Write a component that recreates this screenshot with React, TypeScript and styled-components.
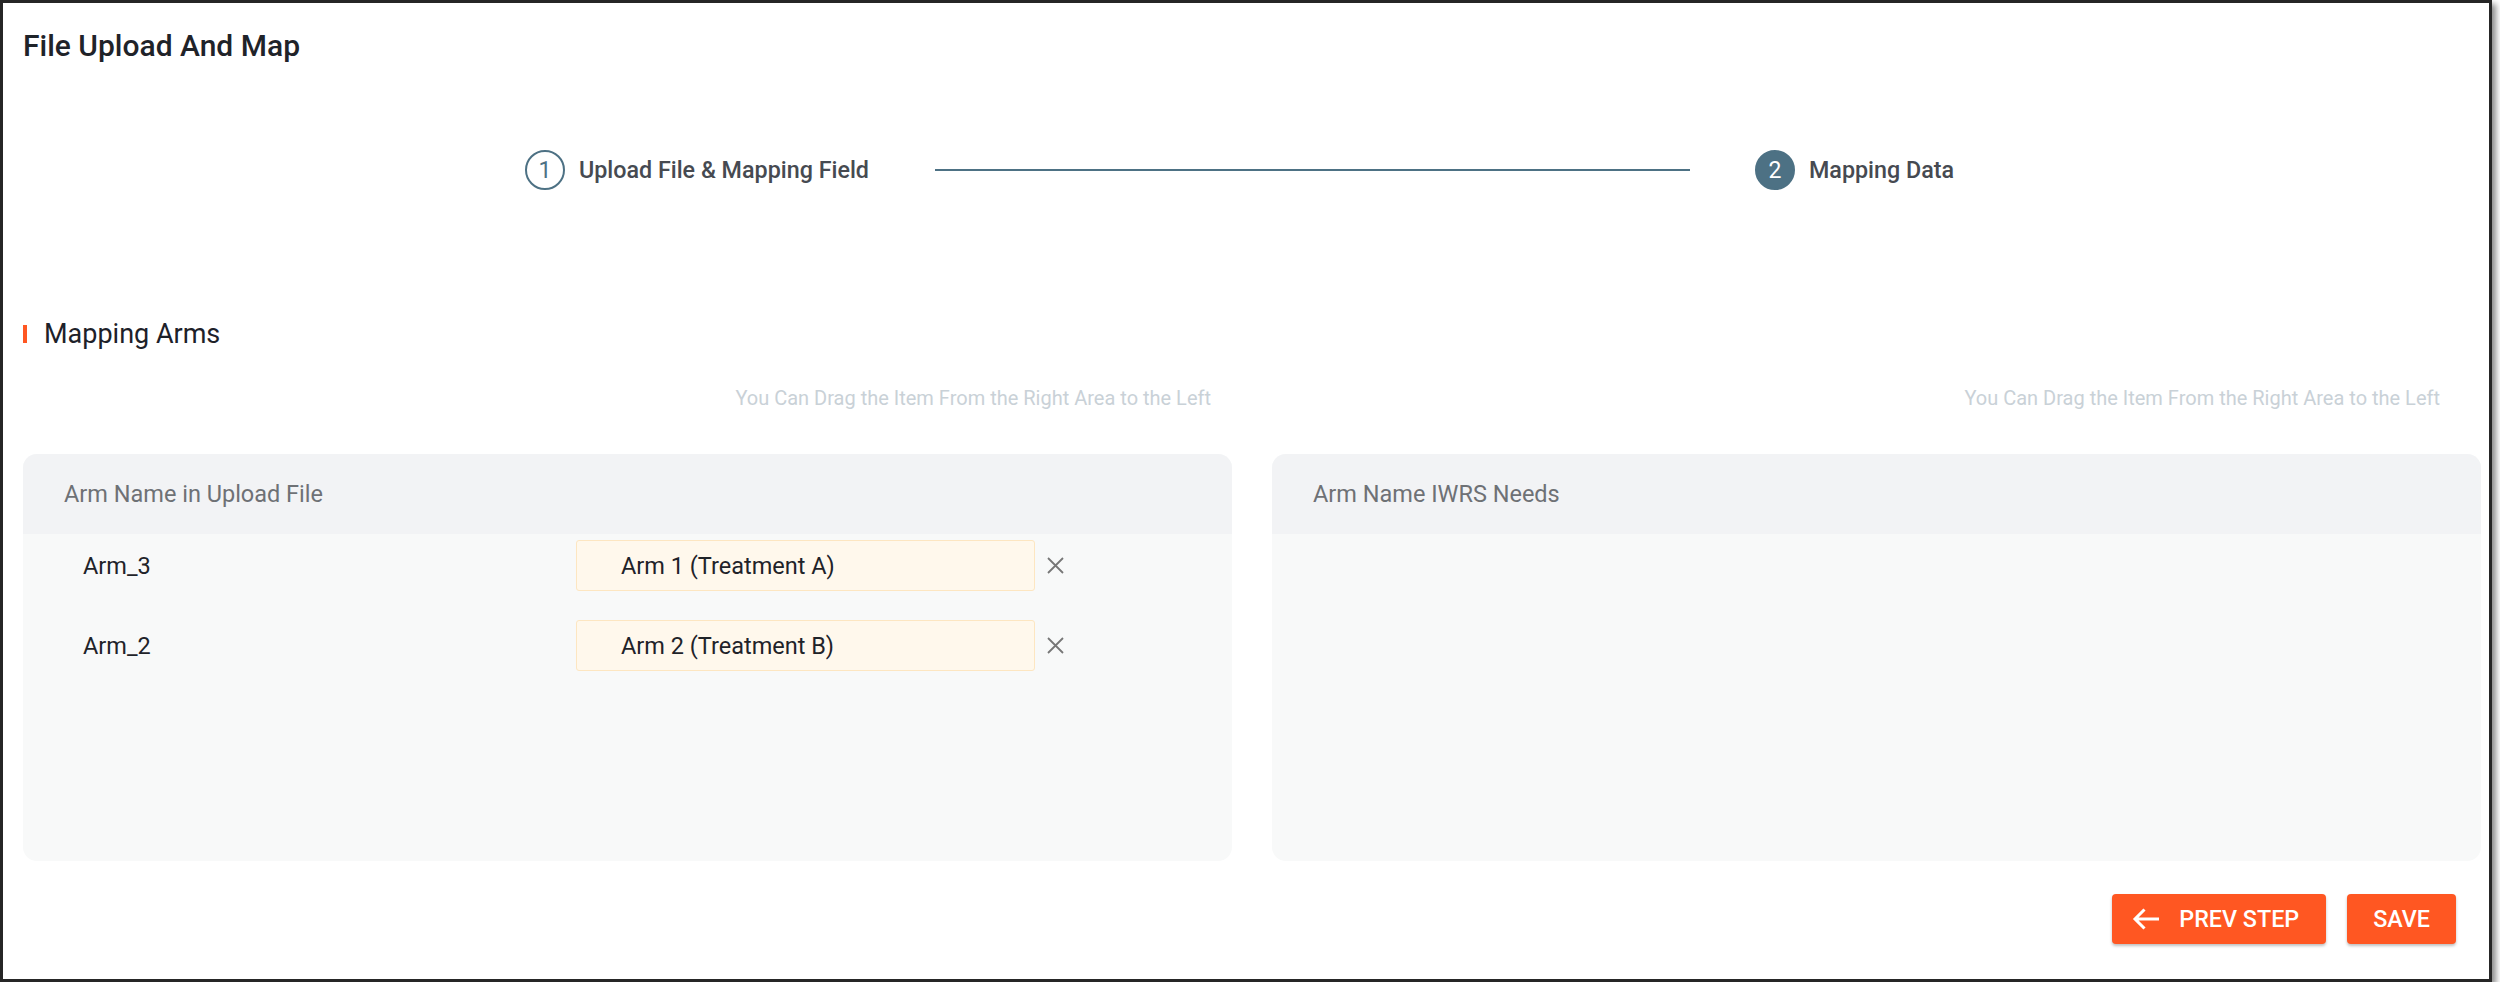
import React from 'react'
import styled, { createGlobalStyle } from 'styled-components'

const GlobalStyle = createGlobalStyle`
  html, body {
    margin: 0;
    padding: 0;
    background: #ffffff;
  }
  body {
    font-family: Roboto, "Noto Sans", "Liberation Sans", sans-serif;
    color: #1f2329;
  }
`

const Frame = styled.div`
  box-sizing: border-box;
  width: 2492px;
  height: 982px;
  border: 3px solid #262626;
  box-shadow: 4px 4px 6px rgba(0, 0, 0, 0.45);
  background: #fff;
  padding: 23px 8px 0 20px;
  display: flex;
  flex-direction: column;
`

const Title = styled.h1`
  margin: 0;
  font-size: 30px;
  line-height: 40px;
  font-weight: 500;
  color: #1f2329;
`

const Steps = styled.div`
  margin-top: 84px;
  height: 40px;
  display: flex;
  align-items: center;
  justify-content: center;
  padding-right: 25px;
`

const Step = styled.div`
  display: flex;
  align-items: center;
  gap: 14px;
`

const StepDot = styled.span<{ $active?: boolean }>`
  box-sizing: border-box;
  width: 40px;
  height: 40px;
  border-radius: 50%;
  border: 2px solid #4d7184;
  background: ${p => (p.$active ? '#4d7184' : '#fff')};
  color: ${p => (p.$active ? '#fff' : '#4d7184')};
  display: flex;
  align-items: center;
  justify-content: center;
  font-size: 23px;
`

const StepLabel = styled.span`
  font-size: 23.3px;
  font-weight: 500;
  color: #464a51;
  white-space: nowrap;
`

const StepLine = styled.div`
  width: 755px;
  height: 2px;
  margin: 0 65px 0 66px;
  background: #4d7184;
`

const Section = styled.div`
  margin-top: 129px;
  display: flex;
  align-items: center;
  gap: 17px;
  height: 30px;
  font-size: 27px;
  color: #1d2129;

  &::before {
    content: '';
    width: 4px;
    height: 18px;
    background: #ff5722;
  }
`

const Columns = styled.div`
  display: grid;
  grid-template-columns: 1fr 1fr;
  column-gap: 40px;
`

const Hint = styled.div<{ $inset: number }>`
  margin-top: 36px;
  padding-right: ${p => p.$inset}px;
  text-align: right;
  font-size: 20px;
  line-height: 26px;
  color: #c9d1d7;
`

const Panel = styled.div`
  margin-top: 43px;
  height: 407px;
  border-radius: 14px;
  overflow: hidden;
  background: #f8f9f9;
`

const PanelHead = styled.div`
  height: 80px;
  display: flex;
  align-items: center;
  padding-left: 41px;
  background: #f2f3f5;
  font-size: 23.5px;
  color: #6e7175;
`

const Rows = styled.div`
  padding: 6px 0 0 60px;
  display: flex;
  flex-direction: column;
  gap: 29px;
`

const Row = styled.div`
  display: grid;
  grid-template-columns: 481px 459px 17px;
  column-gap: 12px;
  align-items: center;
  height: 51px;
  font-size: 23.5px;
  color: #1f2329;
`

const Chip = styled.div`
  box-sizing: border-box;
  height: 51px;
  display: flex;
  align-items: center;
  padding-left: 44px;
  background: #fff8ec;
  border: 1px solid #fde6c1;
  border-radius: 3px;
`

const Remove = styled.button`
  border: 0;
  padding: 0;
  background: none;
  width: 17px;
  height: 17px;
  cursor: pointer;
  display: flex;
`

const Footer = styled.div`
  margin-top: 33px;
  margin-right: 25px;
  display: flex;
  justify-content: flex-end;
  gap: 21px;
`

const Button = styled.button<{ $icon?: boolean }>`
  height: 50px;
  border: 0;
  border-radius: 4px;
  padding: ${p => (p.$icon ? '0 27px 0 20px' : '0 26px')};
  display: flex;
  align-items: center;
  gap: 20px;
  background: #ff5722;
  color: #fff;
  font-family: Roboto, sans-serif;
  font-size: 23.3px;
  font-weight: 500;
  box-shadow: 0 2px 3px rgba(0, 0, 0, 0.25);
  cursor: pointer;
`

const arms = [
  { file: 'Arm_3', iwrs: 'Arm 1 (Treatment A)' },
  { file: 'Arm_2', iwrs: 'Arm 2 (Treatment B)' },
]

const hint = 'You Can Drag the Item From the Right Area to the Left'

function CloseIcon() {
  return (
    <svg width="17" height="17" viewBox="0 0 17 17" fill="none" stroke="#777" strokeWidth="1.8">
      <path d="M1 1 16 16M16 1 1 16" />
    </svg>
  )
}

function BackArrow() {
  return (
    <svg width="27" height="22" viewBox="0 0 27 22" fill="none" stroke="#fff" strokeWidth="3">
      <path d="M27 11H3M12.5 1.5 3 11l9.5 9.5" />
    </svg>
  )
}

export default function App() {
  return (
    <>
      <GlobalStyle />
      <Frame>
        <Title>File Upload And Map</Title>

        <Steps>
          <Step>
            <StepDot>1</StepDot>
            <StepLabel>Upload File &amp; Mapping Field</StepLabel>
          </Step>
          <StepLine />
          <Step>
            <StepDot $active>2</StepDot>
            <StepLabel>Mapping Data</StepLabel>
          </Step>
        </Steps>

        <Section>Mapping Arms</Section>

        <Columns>
          <Hint $inset={21}>{hint}</Hint>
          <Hint $inset={41}>{hint}</Hint>
          <Panel>
            <PanelHead>Arm Name in Upload File</PanelHead>
            <Rows>
              {arms.map(a => (
                <Row key={a.file}>
                  <span>{a.file}</span>
                  <Chip>{a.iwrs}</Chip>
                  <Remove aria-label="remove">
                    <CloseIcon />
                  </Remove>
                </Row>
              ))}
            </Rows>
          </Panel>
          <Panel>
            <PanelHead>Arm Name IWRS Needs</PanelHead>
          </Panel>
        </Columns>

        <Footer>
          <Button $icon>
            <BackArrow />
            PREV STEP
          </Button>
          <Button>SAVE</Button>
        </Footer>
      </Frame>
    </>
  )
}
